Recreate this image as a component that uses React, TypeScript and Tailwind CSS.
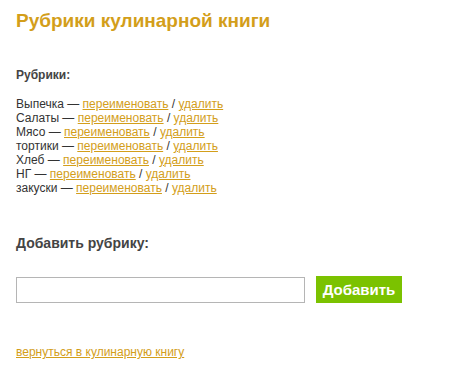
const rubrics = ["Выпечка", "Салаты", "Мясо", "тортики", "Хлеб", "НГ", "закуски"];

export default function App() {
  return (
    <div className="min-h-screen bg-white px-4 pt-[9px] text-[12px] leading-[14px] text-[#333] font-['Liberation_Sans',Arial,sans-serif]">
      <h1 className="text-[19px] leading-[24px] font-bold text-[#d39e1a]">
        Рубрики кулинарной книги
      </h1>

      <h2 className="mt-[35px] text-[12px] font-bold text-[#444]">Рубрики:</h2>

      <ul className="mt-[15px]">
        {rubrics.map((r) => (
          <li key={r}>
            {r} —{" "}
            <a href="#" className="text-[#d39e1a] underline">
              переименовать
            </a>{" "}
            /{" "}
            <a href="#" className="text-[#d39e1a] underline">
              удалить
            </a>
          </li>
        ))}
      </ul>

      <h2 className="mt-[39px] text-[14px] leading-[18px] font-bold text-[#444]">
        Добавить рубрику:
      </h2>

      <form className="mt-[24px] flex items-center gap-[11px]">
        <input
          type="text"
          className="h-[26px] w-[289px] border border-[#b5b5b5] bg-white px-1"
        />
        <button
          type="button"
          className="h-[27px] w-[86px] bg-[#7bc200] text-[15px] font-bold text-white"
        >
          Добавить
        </button>
      </form>

      <a href="#" className="mt-[42px] inline-block text-[#d39e1a] underline">
        вернуться в кулинарную книгу
      </a>
    </div>
  );
}
